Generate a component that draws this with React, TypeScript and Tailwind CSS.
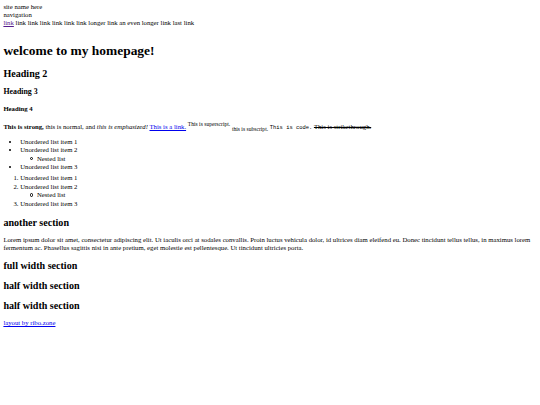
function NestedItem() {
  return (
    <ul className="pl-[16.8px] list-none">
      <li>
        <span className="inline-block align-[0.6px] -ml-[7px] mr-[3.5px] w-[3.4px] h-[3.4px] rounded-full border-[0.7px] border-black"></span>
        Nested list
      </li>
    </ul>
  );
}

export default function App() {
  return (
    <div className="bg-white min-h-[405px] px-[3.4px] pt-[2.5px] pb-4 font-['Liberation_Serif',serif] text-[6.72px] leading-[8px] text-black">
      {/* header */}
      <div>site name here</div>
      <div>navigation</div>
      <div>
        <a href="#" className="text-[#551a8b] underline">link</a> link link link link link link longer link an even longer link last link
      </div>

      <h1 className="mt-[16.8px] mb-[9.4px] text-[13.44px] leading-[15.5px] font-bold">welcome to my homepage!</h1>
      <h2 className="mb-[7px] text-[10.08px] leading-[11.6px] font-bold">Heading 2</h2>
      <h3 className="mb-[9.2px] text-[7.86px] leading-[9px] font-bold">Heading 3</h3>
      <h4 className="mb-[10.3px] text-[6.72px] leading-[8px] font-bold">Heading 4</h4>

      <p>
        <strong className="font-bold">This is strong,</strong> this is normal, and <em className="italic">this is emphasized!</em>{' '}
        <a href="#" className="text-[#0000ee] underline">This is a link.</a>{' '}
        <sup className="text-[5.6px] top-[-0.6em]">This is superscript.</sup>{' '}
        <sub className="text-[5.6px] bottom-[-0.3em]">this is subscript.</sub>{' '}
        <code className="font-['Liberation_Mono',monospace] text-[5.46px]">This is code.</code>{' '}
        <s className="line-through">This is strikethrough.</s>
      </p>

      <ul className="mt-[5.7px] pl-[16.8px] list-disc leading-[8.5px]">
        <li>Unordered list item 1</li>
        <li>
          Unordered list item 2
          <NestedItem />
        </li>
        <li>Unordered list item 3</li>
      </ul>

      <ol className="mt-[2.5px] pl-[16.8px] list-decimal leading-[8.5px]">
        <li>Unordered list item 1</li>
        <li>
          Unordered list item 2
          <NestedItem />
        </li>
        <li>Unordered list item 3</li>
      </ol>

      <section className="mt-[8.4px]">
        <h2 className="mb-[7.5px] text-[10.08px] leading-[11.6px] font-bold">another section</h2>
        <p>
          Lorem ipsum dolor sit amet, consectetur adipiscing elit. Ut iaculis orci at sodales convallis. Proin luctus vehicula dolor, id ultrices diam eleifend eu. Donec tincidunt tellus tellus, in maximus lorem fermentum ac. Phasellus sagittis nisi in ante pretium, eget molestie est pellentesque. Ut tincidunt ultricies porta.
        </p>
      </section>

      <section className="mt-[8px] flex flex-col gap-[8.4px]">
        <h2 className="text-[10.08px] leading-[11.6px] font-bold">full width section</h2>
        <h2 className="text-[10.08px] leading-[11.6px] font-bold">half width section</h2>
        <h2 className="text-[10.08px] leading-[11.6px] font-bold">half width section</h2>
      </section>

      <footer className="mt-[7.5px]">
        <a href="#" className="text-[#0000ee] underline">layout by ribo.zone</a>
      </footer>
    </div>
  );
}
